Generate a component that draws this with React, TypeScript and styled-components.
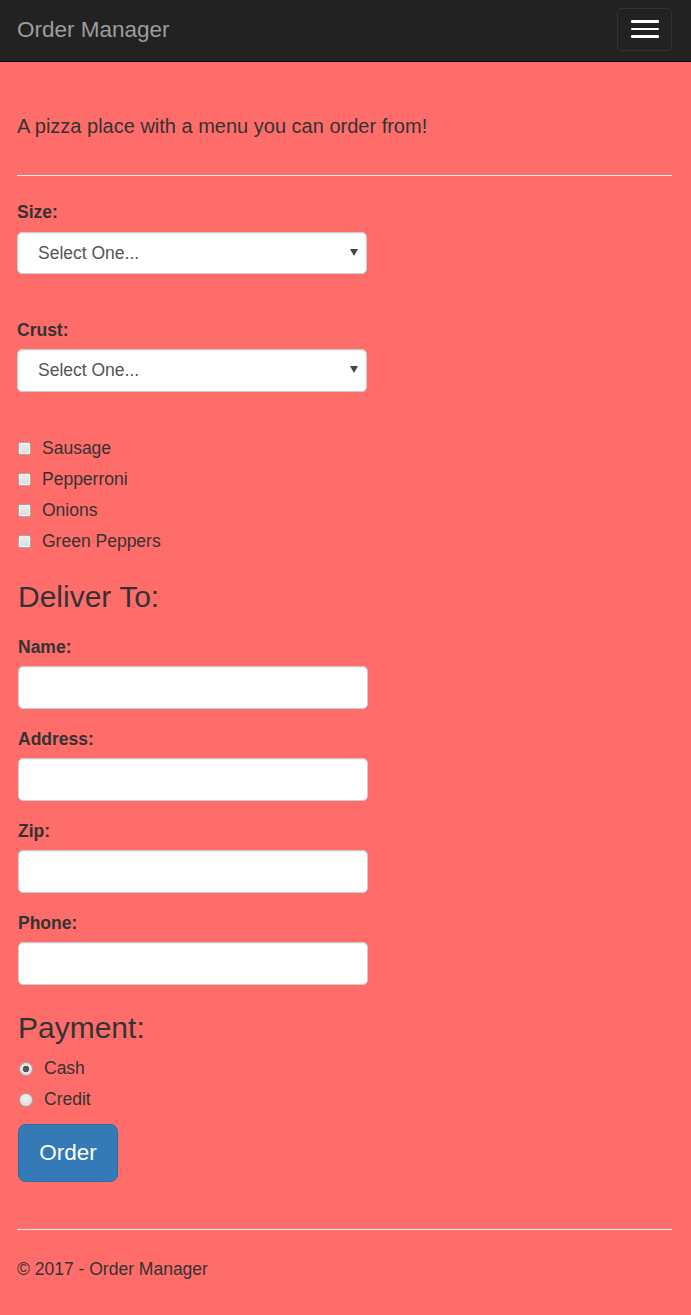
import React from "react";
import styled, { createGlobalStyle } from "styled-components";

const GlobalStyle = createGlobalStyle`
  html, body { margin: 0; padding: 0; }
  body {
    background: #ff6d6b;
    font-family: "Liberation Sans", Arial, Helvetica, sans-serif;
    font-size: 17.5px;
    line-height: 25px;
    color: #333;
  }
  * { box-sizing: border-box; }
`;

const Navbar = styled.nav`
  height: 62px;
  background: #222;
  border-bottom: 1px solid #080808;
  display: flex;
  align-items: center;
  justify-content: space-between;
  padding: 0 19px 0 17px;
`;

const Brand = styled.a`
  font-size: 22.5px;
  line-height: 25px;
  color: #9d9d9d;
  text-decoration: none;
  margin-top: -3px;
`;

const Toggle = styled.button`
  width: 55px;
  height: 43px;
  margin-top: -3px;
  border: 1px solid #333;
  border-radius: 5px;
  background: transparent;
  display: flex;
  flex-direction: column;
  align-items: center;
  justify-content: center;
  gap: 5px;
  padding: 0;
`;

const Bar = styled.span`
  display: block;
  width: 28px;
  height: 2.5px;
  background: #fff;
  border-radius: 1px;
`;

const Container = styled.main`
  padding: 0 19px 0 17px;
`;

const Lead = styled.p`
  margin: 50px 0 0;
  font-size: 20px;
  line-height: 28px;
`;

const Rule = styled.hr<{ $top: number }>`
  border: 0;
  border-top: 1px solid #eee;
  margin: ${(p) => p.$top}px 0 0;
  height: 0;
`;

const Group = styled.div<{ $top: number }>`
  margin-top: ${(p) => p.$top}px;
`;

const Label = styled.label`
  display: block;
  font-weight: bold;
  line-height: 25px;
  margin-bottom: 6.5px;
`;

const SelectWrap = styled.div`
  position: relative;
  width: 350px;
`;

const Select = styled.select`
  appearance: none;
  -webkit-appearance: none;
  width: 350px;
  height: 42.5px;
  padding: 0 30px 0 20px;
  font-family: inherit;
  font-size: 17.5px;
  color: #555;
  background: #fff;
  border: 1px solid #ccc;
  border-radius: 5px;
  box-shadow: inset 0 1px 1px rgba(0, 0, 0, 0.075);
`;

const Arrow = styled.span`
  position: absolute;
  right: 9px;
  top: 17px;
  width: 0;
  height: 0;
  border-left: 4px solid transparent;
  border-right: 4px solid transparent;
  border-top: 7px solid #444;
  pointer-events: none;
`;

const TextInput = styled.input`
  display: block;
  width: 350px;
  height: 42.5px;
  padding: 0 15px;
  font-family: inherit;
  font-size: 17.5px;
  color: #555;
  background: #fff;
  border: 1px solid #ccc;
  border-radius: 5px;
  box-shadow: inset 0 1px 1px rgba(0, 0, 0, 0.075);
`;

const OptionList = styled.div<{ $top: number }>`
  margin-top: ${(p) => p.$top}px;
  display: flex;
  flex-direction: column;
  gap: 6px;
`;

const OptionRow = styled.label`
  display: flex;
  align-items: center;
  height: 25px;
  padding-left: 1px;
  gap: 11px;
  font-weight: normal;
`;

const CheckBox = styled.input`
  appearance: none;
  -webkit-appearance: none;
  margin: 0;
  width: 13px;
  height: 13px;
  border: 1px solid #a6a6a6;
  border-radius: 2px;
  background: linear-gradient(#ededed, #dcdcdc);
  box-shadow: inset 0 0 0 1px #f4f4f4;
`;

const Radio = styled.input`
  appearance: none;
  -webkit-appearance: none;
  margin: 0;
  width: 14px;
  height: 14px;
  border: 1px solid #a6a6a6;
  border-radius: 50%;
  background: radial-gradient(circle at 50% 40%, #f2f2f2, #d8d8d8);
  &:checked {
    background: radial-gradient(circle, #555 0 3px, #e4e4e4 3.5px, #d8d8d8 100%);
  }
`;

const Heading = styled.h3<{ $top: number }>`
  margin: ${(p) => p.$top}px 0 0;
  font-size: 30px;
  font-weight: normal;
  line-height: 33px;
  color: #333;
`;

const OrderButton = styled.button`
  margin-top: 12px;
  width: 100px;
  height: 57.5px;
  background: #337ab7;
  border: 1px solid #2e6da4;
  border-radius: 7.5px;
  color: #fff;
  font-family: inherit;
  font-size: 22.5px;
  padding: 0 20px;
`;

const Footer = styled.footer`
  margin-top: 26.5px;
  line-height: 25px;
  padding-bottom: 35px;
`;

const Section = styled.div`
  padding-left: 1px;
`;

const fields = ["Name:", "Address:", "Zip:", "Phone:"];
const toppings = ["Sausage", "Pepperroni", "Onions", "Green Peppers"];

export default function App() {
  return (
    <>
      <GlobalStyle />
      <Navbar>
        <Brand href="#">Order Manager</Brand>
        <Toggle aria-label="Toggle navigation">
          <Bar />
          <Bar />
          <Bar />
        </Toggle>
      </Navbar>
      <Container>
        <Lead>A pizza place with a menu you can order from!</Lead>
        <Rule $top={35} />
        <Group $top={24}>
          <Label>Size:</Label>
          <SelectWrap>
            <Select defaultValue="">
              <option value="">Select One...</option>
            </Select>
            <Arrow />
          </SelectWrap>
        </Group>
        <Group $top={43.5}>
          <Label>Crust:</Label>
          <SelectWrap>
            <Select defaultValue="">
              <option value="">Select One...</option>
            </Select>
            <Arrow />
          </SelectWrap>
        </Group>
        <OptionList $top={44}>
          {toppings.map((t) => (
            <OptionRow key={t}>
              <CheckBox type="checkbox" />
              {t}
            </OptionRow>
          ))}
        </OptionList>
        <Section>
          <Heading $top={26}>Deliver To:</Heading>
          {fields.map((f, i) => (
            <Group key={f} $top={i === 0 ? 22 : 18}>
              <Label>{f}</Label>
              <TextInput type="text" />
            </Group>
          ))}
          <Heading $top={26.5}>Payment:</Heading>
          <OptionList $top={12}>
            <OptionRow>
              <Radio type="radio" name="pay" defaultChecked />
              Cash
            </OptionRow>
            <OptionRow>
              <Radio type="radio" name="pay" />
              Credit
            </OptionRow>
          </OptionList>
          <OrderButton>Order</OrderButton>
        </Section>
        <Rule $top={47.5} />
        <Footer>© 2017 - Order Manager</Footer>
      </Container>
    </>
  );
}
